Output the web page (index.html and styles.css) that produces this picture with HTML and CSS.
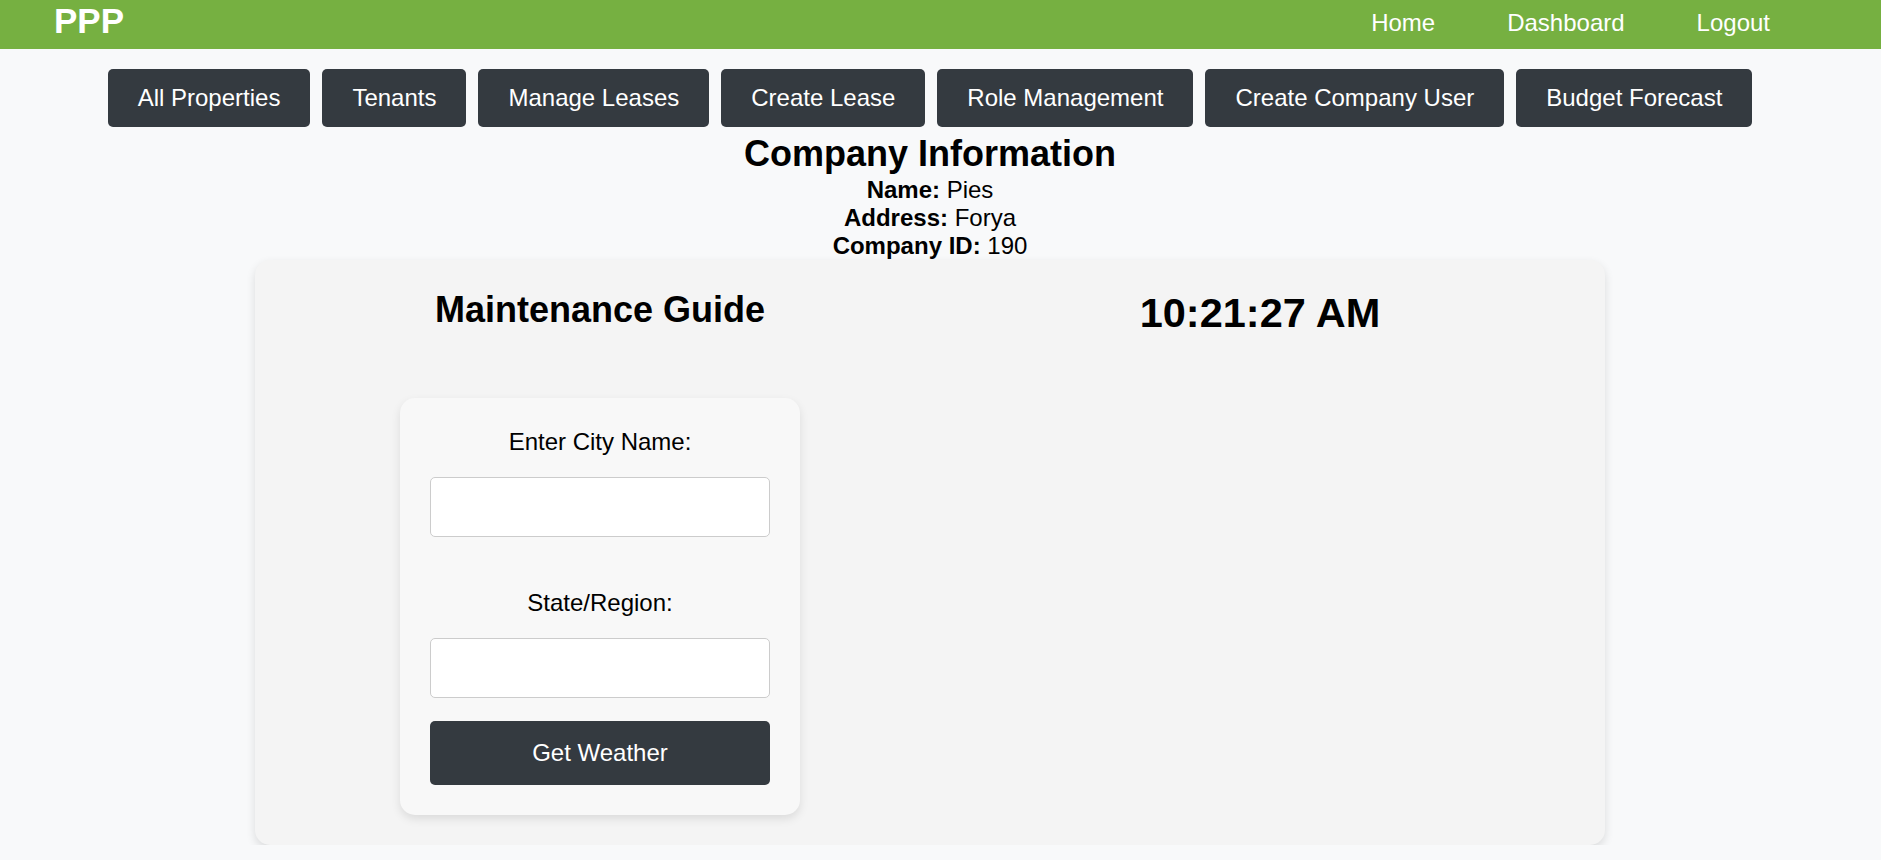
FILE: index.html
```html
<!DOCTYPE html>
<html lang="en">
<head>
<meta charset="utf-8">
<title>PPP - Company Dashboard</title>
<link rel="stylesheet" href="styles.css">
</head>
<body>
<nav class="navbar">
  <div class="brand">PPP</div>
  <ul class="nav-links">
    <li><a href="#">Home</a></li>
    <li><a href="#">Dashboard</a></li>
    <li><a href="#">Logout</a></li>
  </ul>
</nav>
<main class="main">
  <div class="toolbar">
    <button class="tool-btn">All Properties</button>
    <button class="tool-btn">Tenants</button>
    <button class="tool-btn">Manage Leases</button>
    <button class="tool-btn">Create Lease</button>
    <button class="tool-btn">Role Management</button>
    <button class="tool-btn">Create Company User</button>
    <button class="tool-btn">Budget Forecast</button>
  </div>
  <section class="company-info">
    <h1 class="company-title">Company Information</h1>
    <p class="info-line"><strong>Name:</strong> Pies</p>
    <p class="info-line"><strong>Address:</strong> Forya</p>
    <p class="info-line"><strong>Company ID:</strong> 190</p>
  </section>
  <section class="panel">
    <div class="panel-col">
      <h2 class="panel-title">Maintenance Guide</h2>
      <form class="weather-form">
        <div class="field field-first">
          <label class="field-label" for="city">Enter City Name:</label>
          <input class="field-input" id="city" type="text">
        </div>
        <div class="field">
          <label class="field-label" for="state">State/Region:</label>
          <input class="field-input" id="state" type="text">
        </div>
        <button type="button" class="submit-btn">Get Weather</button>
      </form>
    </div>
    <div class="panel-col">
      <div class="clock">10:21:27 AM</div>
    </div>
  </section>
</main>
</body>
</html>
```
FILE: styles.css
```css
* {
  box-sizing: border-box;
}

html, body {
  margin: 0;
  padding: 0;
}

body {
  background: #f8f9fa;
  font-family: "Liberation Sans", Arial, sans-serif;
  color: #000;
}

.navbar {
  display: flex;
  justify-content: space-between;
  align-items: flex-start;
  height: 49px;
  background: #76b041;
  padding: 1px 111px 0 54px;
}

.brand {
  font-size: 35px;
  font-weight: bold;
  color: #fff;
  line-height: normal;
}

.nav-links {
  display: flex;
  gap: 72px;
  list-style: none;
  margin: 8px 0 0;
  padding: 0;
}

.nav-links a {
  color: #fff;
  text-decoration: none;
  font-size: 24px;
  line-height: normal;
}

.main {
  margin-right: 21px;
}

.toolbar {
  display: flex;
  justify-content: center;
  gap: 12px;
  margin-top: 20px;
}

.tool-btn {
  background: #343a40;
  color: #fff;
  border: none;
  border-radius: 5px;
  font-family: inherit;
  font-size: 24px;
  line-height: normal;
  padding: 15px 30px;
  height: 58px;
  cursor: pointer;
}

.company-info {
  text-align: center;
}

.company-title {
  font-size: 36px;
  font-weight: bold;
  line-height: normal;
  margin: 6px 0 1px;
}

.info-line {
  font-size: 24px;
  line-height: normal;
  margin: 0;
}

.panel {
  display: grid;
  grid-template-columns: 1fr 1fr;
  width: 1350px;
  margin: 0 auto;
  padding: 29px 15px 30px;
  background: #f4f4f4;
  border-radius: 15px;
  box-shadow: 0 4px 10px rgba(0, 0, 0, 0.12);
}

.panel-col {
  display: flex;
  flex-direction: column;
  align-items: center;
}

.panel-title {
  font-size: 36px;
  font-weight: bold;
  line-height: normal;
  margin: 0 0 67px;
}

.weather-form {
  width: 400px;
  padding: 30px;
  background: #f8f8f8;
  border-radius: 15px;
  box-shadow: 0 4px 10px rgba(0, 0, 0, 0.1);
  text-align: center;
}

.field {
  margin-bottom: 23px;
}

.field-first {
  margin-bottom: 52px;
}

.field-label {
  display: block;
  font-size: 24px;
  line-height: normal;
  margin-bottom: 21px;
}

.field-input {
  display: block;
  width: 100%;
  height: 60px;
  border: 1px solid #cccccc;
  border-radius: 5px;
  background: #fff;
  font-family: inherit;
  font-size: 24px;
  padding: 0 12px;
}

.submit-btn {
  display: block;
  width: 100%;
  height: 64px;
  background: #343a40;
  color: #fff;
  border: none;
  border-radius: 5px;
  font-family: inherit;
  font-size: 24px;
  cursor: pointer;
}

.clock {
  font-size: 41.5px;
  font-weight: bold;
  line-height: normal;
}
```
